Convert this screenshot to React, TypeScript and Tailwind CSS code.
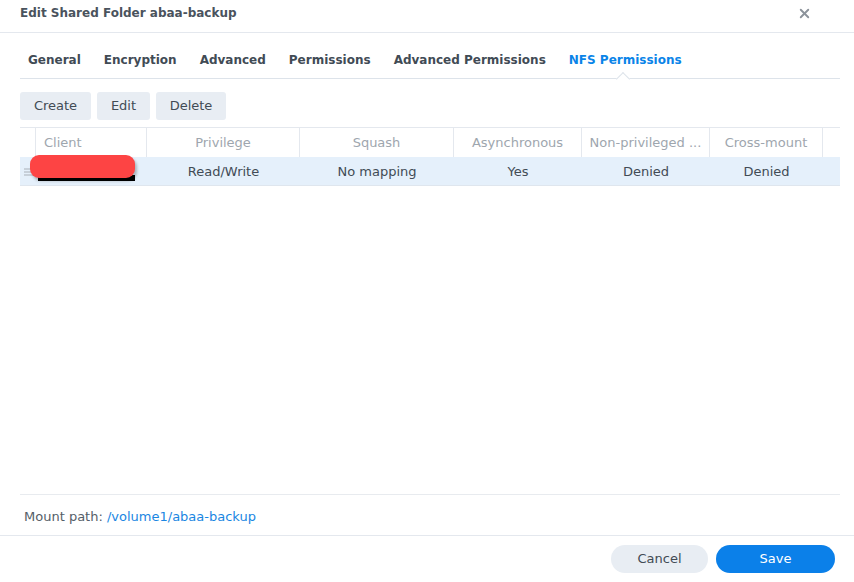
import React from 'react';
import { X } from 'lucide-react';

const tabs = ['General', 'Encryption', 'Advanced', 'Permissions', 'Advanced Permissions', 'NFS Permissions'];

// column widths follow the grid lines in the dialog
const columns = [
    { label: '', width: 'w-[16px]', align: 'text-center' },
    { label: 'Client', width: 'w-[111px]', align: 'text-left pl-[8px]' },
    { label: 'Privilege', width: 'w-[153px]', align: 'text-center' },
    { label: 'Squash', width: 'w-[154px]', align: 'text-center' },
    { label: 'Asynchronous', width: 'w-[128px]', align: 'text-center' },
    { label: 'Non-privileged ...', width: 'w-[128px]', align: 'text-center' },
    { label: 'Cross-mount', width: 'w-[113px]', align: 'text-center' },
];

const row = ['Read/Write', 'No mapping', 'Yes', 'Denied', 'Denied'];

const App: React.FC = () => {
    return (
        <div className="w-[854px] h-[582px] bg-white flex flex-col font-['DejaVu_Sans',sans-serif] text-[13px] text-[#414b55] overflow-hidden">
            {/* Title bar */}
            <div className="h-[33px] shrink-0 border-b border-[#e4e8ee] flex items-start justify-between pl-[20px] pr-[42px] pt-[3px]">
                <div className="font-bold text-[12px] text-[#4a535d] leading-[20px]">Edit Shared Folder abaa-backup</div>
                <X size={15} strokeWidth={3} className="text-[#8c939b] mt-[3px]" />
            </div>

            {/* Tabs */}
            <div className="ml-[20px] mr-[14px] h-[46px] pt-[8px] shrink-0 border-b border-[#dde3ea] flex items-center gap-[23px] pl-[8px]">
                {tabs.map(tab => (
                    <div
                        key={tab}
                        className={`relative h-full flex items-center font-bold text-[12px] ${tab === 'NFS Permissions' ? 'text-[#0a84e8]' : 'text-[#414b55]'}`}
                    >
                        {tab}
                        {tab === 'NFS Permissions' && (
                            <span className="absolute bottom-[-6px] left-1/2 -ml-[7px] w-[10px] h-[10px] rotate-45 bg-white border-l border-t border-[#dde3ea]" />
                        )}
                    </div>
                ))}
            </div>

            {/* Toolbar */}
            <div className="mx-[20px] mt-[13px] flex gap-[6px] shrink-0">
                <button className="h-[28px] w-[71px] rounded-[3px] bg-[#e8edf3] text-[#414b55]">Create</button>
                <button className="h-[28px] w-[53px] rounded-[3px] bg-[#e8edf3] text-[#414b55]">Edit</button>
                <button className="h-[28px] w-[70px] rounded-[3px] bg-[#e8edf3] text-[#414b55]">Delete</button>
            </div>

            {/* Grid */}
            <div className="ml-[20px] mr-[14px] mt-[7px] flex-1 border-t border-[#e4e8ee]">
                <div className="flex h-[29px] items-center text-[#9ea6ae]">
                    {columns.map((col, i) => (
                        <div key={i} className={`${col.width} ${col.align} h-full leading-[30px] border-r border-[#e4e8ee] truncate`}>
                            {col.label}
                        </div>
                    ))}
                </div>
                <div className="relative flex h-[29px] pt-[2px] items-center bg-[#e5f0fb] border-b border-[#dfe6ee]">
                    <div className="w-[16px] flex justify-center">
                        <svg width="9" height="8" viewBox="0 0 9 8" className="text-[#a9b0b8]">
                            <path d="M0 1h9M0 4h9M0 7h9" stroke="currentColor" strokeWidth="1" />
                        </svg>
                    </div>
                    <div className="w-[111px]" />
                    {row.map((cell, i) => (
                        <div key={i} className={`${columns[i + 2].width} text-center`}>{cell}</div>
                    ))}
                    {/* redacted client name */}
                    <div className="absolute left-[18px] top-[18px] w-[97px] h-[6px] bg-black" />
                    <div className="absolute left-[10px] top-[-2px] w-[105px] h-[23px] rounded-[9px] bg-[#fd4444] shadow-[2px_3px_3px_rgba(0,0,0,0.25)]" />
                </div>
            </div>

            {/* Mount path */}
            <div className="ml-[20px] mr-[14px] h-[41px] pt-[3px] shrink-0 border-t border-[#e8ebef] flex items-center pl-[4px]">
                <span className="text-[#555e68]">Mount path:&nbsp;</span>
                <span className="text-[#1a86e2]">/volume1/abaa-backup</span>
            </div>

            {/* Footer */}
            <div className="h-[47px] shrink-0 border-t border-[#e4e8ee] flex justify-end items-start pt-[9px] pr-[19px] gap-[8px]">
                <button className="h-[28px] w-[97px] rounded-full bg-[#e8edf3] text-[#414b55]">Cancel</button>
                <button className="h-[28px] w-[119px] rounded-full bg-[#0b80e9] text-white">Save</button>
            </div>
        </div>
    );
};

export default App;
